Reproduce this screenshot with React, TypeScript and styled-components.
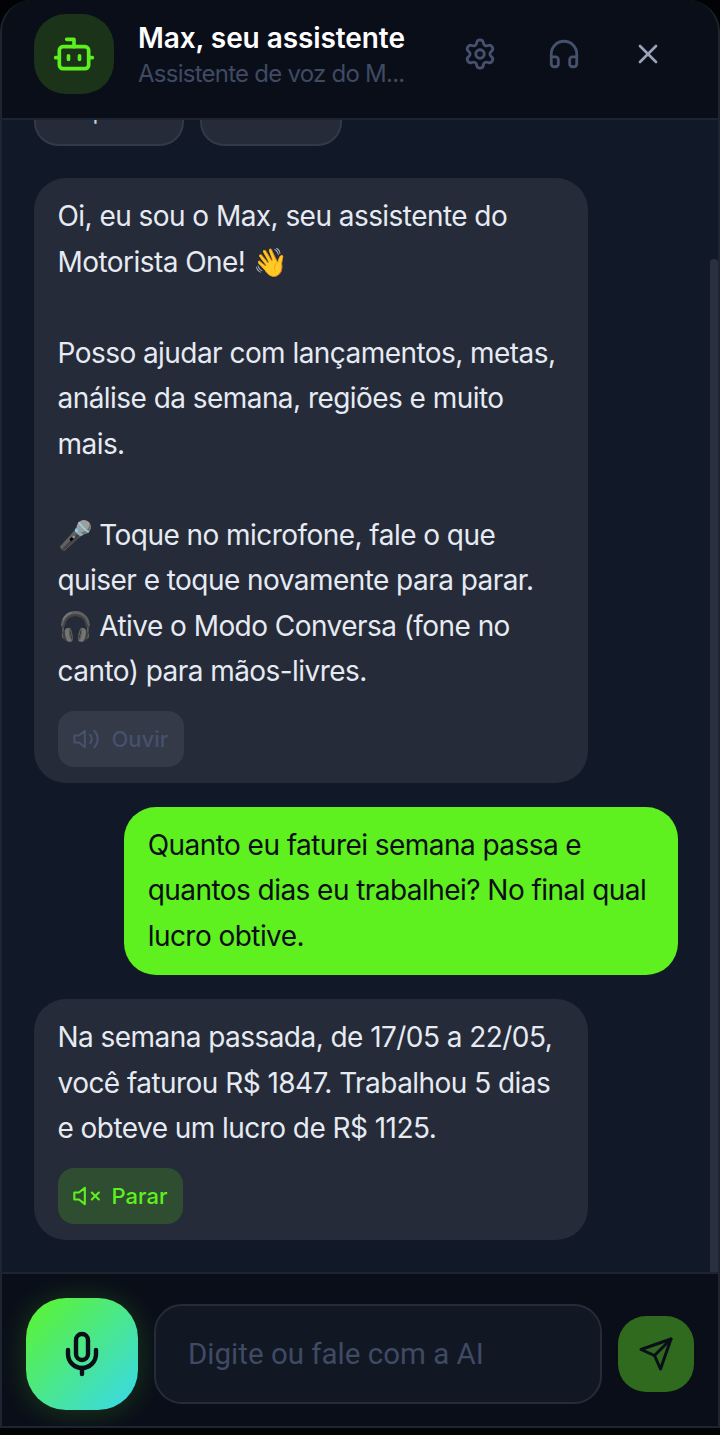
import React from 'react'
import styled, { createGlobalStyle } from 'styled-components'
import { Bot, Settings, Headphones, X, Mic } from 'lucide-react'
import { FiSend, FiVolume2, FiVolumeX } from 'react-icons/fi'

const Global = createGlobalStyle`
  html, body { margin: 0; padding: 0; background: #020304; }
  * { box-sizing: border-box; }
  body { font-family: Inter, "Noto Sans", sans-serif; }
`

const Panel = styled.div`
  width: 720px;
  height: 1428px;
  background: #111827;
  border: 2px solid #1f2530;
  border-top: 0;
  border-radius: 32px 32px 0 0;
  display: flex;
  flex-direction: column;
  overflow: hidden;
  position: relative;
`

const Header = styled.header`
  height: 120px;
  flex: none;
  background: #0a0e19;
  border-bottom: 2px solid #1f2530;
  display: flex;
  align-items: flex-start;
  padding: 14px 0 0 32px;
`

const Avatar = styled.div`
  width: 80px;
  height: 80px;
  border-radius: 32px;
  background: #1a3319;
  color: #5df01f;
  display: flex;
  align-items: center;
  justify-content: center;
  flex: none;
`

const TitleBox = styled.div`
  width: 268px;
  margin-left: 24px;
  padding-top: 6px;
`

const Title = styled.div`
  font-size: 28px;
  line-height: 36px;
  font-weight: 600;
  letter-spacing: -0.08px;
  color: #fff;
  white-space: nowrap;
`

const Subtitle = styled.div`
  font-size: 24px;
  line-height: 36px;
  letter-spacing: -0.75px;
  color: #3f4a63;
  white-space: nowrap;
`

const HeaderIcons = styled.div`
  display: flex;
  gap: 20px;
  margin-left: 42px;
`

const IconButton = styled.div<{ $color: string }>`
  width: 64px;
  height: 80px;
  display: flex;
  align-items: center;
  justify-content: center;
  color: ${p => p.$color};
`

const Messages = styled.div`
  flex: 1;
  min-height: 0;
  overflow: hidden;
  padding: 0 40px 0 32px;
  display: flex;
  flex-direction: column;
  gap: 24px;
  position: relative;
`

const ChipRow = styled.div`
  display: flex;
  gap: 16px;
  margin-top: -34px;
  margin-bottom: 8px;
  flex: none;
`

const Chip = styled.div<{ $width: number }>`
  width: ${p => p.$width}px;
  height: 60px;
  border: 2px solid #333947;
  border-radius: 24px;
  background: #252b38;
  color: #c8cfdd;
  font-size: 24px;
  line-height: 40px;
  padding: 3px 0 0 19px;
  overflow: hidden;
  white-space: nowrap;
`

const Bubble = styled.div<{ $user?: boolean }>`
  flex: none;
  width: 86%;
  align-self: ${p => (p.$user ? 'flex-end' : 'flex-start')};
  padding: 16px 24px 16px 23.5px;
  border-radius: 32px;
  background: ${p => (p.$user ? '#5ff01f' : '#252b38')};
  color: ${p => (p.$user ? '#0a0e19' : '#e6eaf2')};
  font-size: 28px;
  line-height: 45.5px;
  letter-spacing: -0.55px;
  white-space: pre-line;
`

const Speak = styled.div<{ $active?: boolean }>`
  display: inline-flex;
  align-items: center;
  gap: 12px;
  height: 56px;
  margin-top: 16px;
  padding: 0 16px 0 14px;
  border-radius: 16px;
  font-size: 22px;
  font-weight: 500;
  line-height: 30px;
  letter-spacing: 0;
  vertical-align: top;
  background: ${p => (p.$active ? '#2f4d30' : '#343a47')};
  color: ${p => (p.$active ? '#5df01f' : '#46516e')};
`

const Scrollbar = styled.div`
  position: absolute;
  right: 0;
  top: 139px;
  bottom: 0;
  width: 8px;
  border-radius: 4px 4px 0 0;
  background: #2a3040;
`

const Footer = styled.footer`
  flex: none;
  height: 154px;
  background: #0a0e19;
  border-top: 2px solid #1f2530;
  display: flex;
  align-items: center;
  gap: 16px;
  padding: 8px 24px 0;
`

const MicButton = styled.div`
  width: 112px;
  height: 112px;
  flex: none;
  border-radius: 40px;
  background: linear-gradient(135deg, #5df52a 0%, #37d8ee 100%);
  box-shadow: 0 2px 30px rgba(93, 240, 31, 0.2);
  color: #0a0e19;
  display: flex;
  align-items: center;
  justify-content: center;
`

const Input = styled.div`
  width: 448px;
  height: 100px;
  flex: none;
  border: 2px solid #252b38;
  border-radius: 28px;
  background: #121724;
  color: #3f4a63;
  font-family: Roboto, sans-serif;
  font-size: 29.5px;
  display: flex;
  align-items: center;
  padding-left: 32px;
`

const SendButton = styled.div`
  width: 76px;
  height: 76px;
  flex: none;
  border-radius: 28px;
  background: #2f6a1e;
  color: #0a0e19;
  display: flex;
  align-items: center;
  justify-content: center;
`

export default function App() {
  return (
    <>
      <Global />
      <Panel>
        <Header>
          <Avatar><Bot size={44} strokeWidth={2} /></Avatar>
          <TitleBox>
            <Title>Max, seu assistente</Title>
            <Subtitle>Assistente de voz do M...</Subtitle>
          </TitleBox>
          <HeaderIcons>
            <IconButton $color="#46516e"><Settings size={34} strokeWidth={2} /></IconButton>
            <IconButton $color="#46516e"><Headphones size={34} strokeWidth={2} /></IconButton>
            <IconButton $color="#98a2b8"><X size={32} strokeWidth={2} /></IconButton>
          </HeaderIcons>
        </Header>
        <Messages>
          <ChipRow>
            <Chip $width={150}>Ampliar</Chip>
            <Chip $width={142}>Metas</Chip>
          </ChipRow>
          <Bubble>
            {`Oi, eu sou o Max, seu assistente do
Motorista One! 👋

Posso ajudar com lançamentos, metas, análise da semana, regiões e muito mais.

🎤 Toque no microfone, fale o que quiser e toque novamente para parar.
🎧 Ative o Modo Conversa (fone no canto) para mãos-livres.`}
            <div>
              <Speak><FiVolume2 size={28} strokeWidth={1.8} />Ouvir</Speak>
            </div>
          </Bubble>
          <Bubble $user>Quanto eu faturei semana passa e quantos dias eu trabalhei? No final qual lucro obtive.</Bubble>
          <Bubble>
            Na semana passada, de 17/05 a 22/05, você faturou R$ 1847. Trabalhou 5 dias e obteve um lucro de R$ 1125.
            <div>
              <Speak $active><FiVolumeX size={28} strokeWidth={1.8} />Parar</Speak>
            </div>
          </Bubble>
          <Scrollbar />
        </Messages>
        <Footer>
          <MicButton><Mic size={48} strokeWidth={2.2} /></MicButton>
          <Input>Digite ou fale com a AI</Input>
          <SendButton><FiSend size={36} strokeWidth={2} /></SendButton>
        </Footer>
      </Panel>
    </>
  )
}
